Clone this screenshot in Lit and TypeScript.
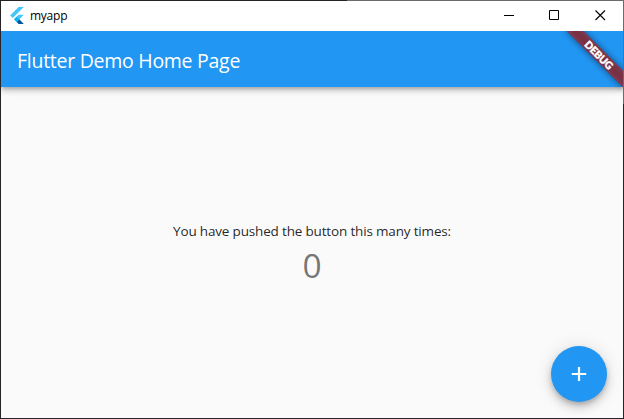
import { LitElement, html, css } from "lit";
import { customElement, state } from "lit/decorators.js";

@customElement("title-bar")
class TitleBar extends LitElement {
  static styles = css`
    :host { display: flex; height: 30px; background: #fff; align-items: stretch; }
    .logo { width: 14px; height: 17px; margin: 6px 0 0 9px; flex: none; }
    .name { font: 12px/30px "Open Sans", "Noto Sans", sans-serif; color: #000; margin-left: 6px; flex: 1; letter-spacing: -0.25px; }
    .control { width: 46px; display: flex; justify-content: center; }
    .control svg { width: 11px; height: 11px; margin-top: 9px; }
  `;
  render() {
    return html`
      <svg class="logo" viewBox="0 0 256 317">
        <path fill="#47c5fb" d="M157.7.8.2 158.3 48.8 206.9 255.3.8zM255.3 145.3h-97.7L73 229.9l48.7 49.3z" />
        <path fill="#00569e" d="m121.7 279.2 36.1 36.1h97.5l-84.7-85.5z" />
        <path fill="#00b5f8" d="m73.1 230 48.6-48.6 48.9 48.5-48.9 49.3z" />
      </svg>
      <span class="name">myapp</span>
      <span class="control"><svg viewBox="0 0 11 11"><path d="M.5 5.5H10.5" stroke="#000" shape-rendering="crispEdges" /></svg></span>
      <span class="control"><svg viewBox="0 0 11 11"><path d="M.5.5h9v9h-9z" stroke="#000" fill="none" /></svg></span>
      <span class="control"><svg viewBox="0 0 11 11"><path d="m.5.5 9.5 9.5m0-9.5L.5 10" stroke="#000" stroke-width="1.1" /></svg></span>
    `;
  }
}

@customElement("debug-banner")
class DebugBanner extends LitElement {
  static styles = css`
    :host { position: absolute; top: 0; right: 0; width: 90px; height: 90px; overflow: hidden; pointer-events: none; }
    .shade, .band { position: absolute; width: 80px; height: 12px; left: 26px; top: 18px; transform: rotate(45deg); }
    .shade { background: rgba(0, 0, 0, 0.5); filter: blur(3.5px); }
    .band { background: rgba(183, 28, 28, 0.627); color: #fff; text-align: center; font: 900 10.2px/12px Lato, sans-serif; -webkit-text-stroke: 0.4px #fff; }
  `;
  render() {
    return html`<div class="shade"></div><div class="band">DEBUG</div>`;
  }
}

@customElement("app-root")
class AppRoot extends LitElement {
  @state() private count = 0;

  static styles = css`
    :host { display: block; height: 100vh; overflow: hidden; }
    .window {
      box-sizing: border-box; height: 100%; padding: 1px; display: flex; flex-direction: column;
      background:
        linear-gradient(90deg, #252325 347px, #6b6b6b 347px) top / 100% 1px no-repeat,
        linear-gradient(#6b6b6b 104px, #252325 104px) right / 1px 100% no-repeat,
        #252325;
    }
    .client { position: relative; flex: 1; min-height: 0; display: flex; flex-direction: column; background: #fafafa; overflow: hidden; }
    .bar {
      position: relative; flex: none; height: 56px; padding-left: 16px; background: #2196f3; color: #fff;
      box-shadow: 0 2px 4px -1px rgba(0, 0, 0, 0.2), 0 4px 5px rgba(0, 0, 0, 0.14), 0 1px 10px rgba(0, 0, 0, 0.12);
      font: 19.5px/60px "Open Sans", "Noto Sans", sans-serif; letter-spacing: -0.27px;
    }
    .body { flex: 1; display: flex; flex-direction: column; align-items: center; justify-content: center; font-family: "Open Sans", "Noto Sans", sans-serif; }
    .label { font-size: 13.5px; line-height: 19px; letter-spacing: -0.17px; color: rgba(0, 0, 0, 0.87); padding-top: 5px; }
    .count { font-size: 33.5px; line-height: 46px; color: rgba(0, 0, 0, 0.54); padding-top: 1px; }
    .fab {
      position: absolute; right: 16px; bottom: 16px; width: 56px; height: 56px; border: 0; padding: 0; border-radius: 50%;
      display: grid; place-items: center; background: #2196f3;
      box-shadow: 0 3px 5px -1px rgba(0, 0, 0, 0.2), 0 6px 10px rgba(0, 0, 0, 0.14), 0 1px 18px rgba(0, 0, 0, 0.12);
    }
    .fab svg { width: 24px; height: 24px; }
  `;

  render() {
    return html`
      <div class="window">
        <title-bar></title-bar>
        <div class="client">
          <div class="bar">Flutter Demo Home Page</div>
          <div class="body">
            <div class="label">You have pushed the button this many times:</div>
            <div class="count">${this.count}</div>
          </div>
          <button class="fab" @click=${() => this.count++}>
            <svg viewBox="0 0 24 24"><path fill="#fff" d="M19.2 13h-6.1v6h-2.2v-6H4.8v-2h6.1V5h2.2v6h6.1z" /></svg>
          </button>
          <debug-banner></debug-banner>
        </div>
      </div>
    `;
  }
}
